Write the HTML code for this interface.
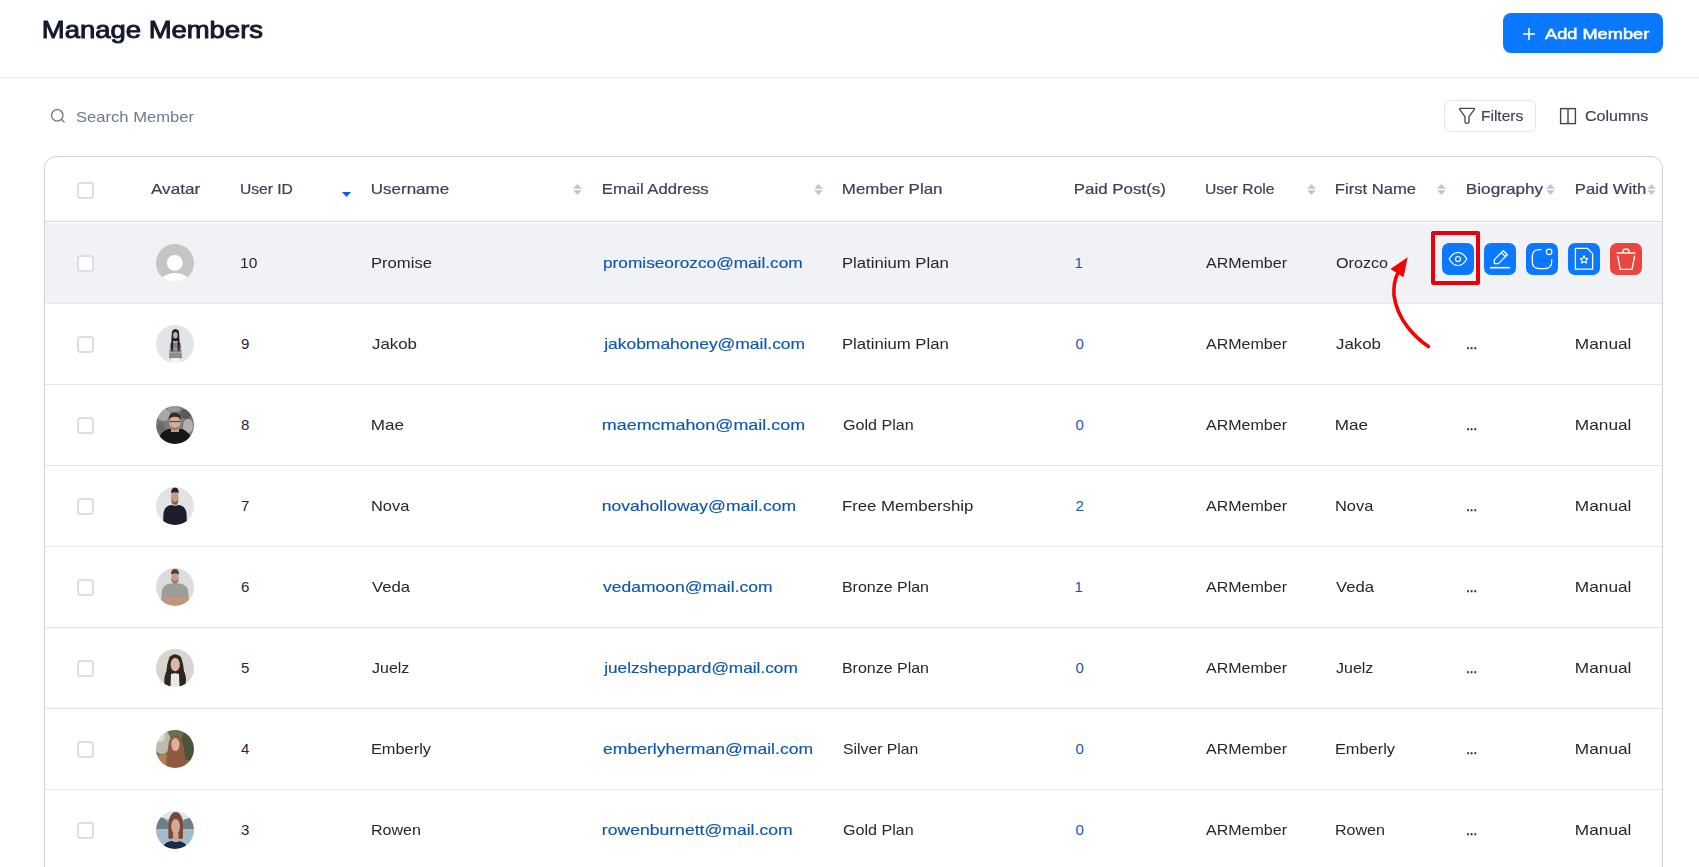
<!DOCTYPE html>
<html><head><meta charset="utf-8"><style>
html,body{margin:0;padding:0;}
body{width:1699px;height:867px;overflow:hidden;position:relative;background:#fff;font-family:"Liberation Sans", sans-serif;}
.t{position:absolute;white-space:nowrap;line-height:1;}
.hdrline{position:absolute;left:0;top:77px;width:1699px;height:1px;background:#e3e5e9;}
.btn{position:absolute;left:1503px;top:13px;width:160px;height:40px;border-radius:8px;background:#0a78ff;}
.filters{position:absolute;left:1444px;top:100px;width:90px;height:30px;border:1px solid #e2e5ea;border-radius:6px;}
.tbl{position:absolute;left:44px;top:156px;width:1617px;height:760px;border:1px solid #cfd2d8;border-radius:12px;}
.hl{position:absolute;left:45px;width:1617px;height:1px;background:#e4e6ea;}
.hb{position:absolute;left:45px;top:221px;width:1617px;height:1px;background:#d5d8dd;}
.r1{position:absolute;left:45px;top:223px;width:1617px;height:80px;background:#f1f2f6;}
.cb{position:absolute;left:77px;width:13px;height:13px;border:2px solid #dcdde6;border-radius:3.5px;background:#fff;}
.av{position:absolute;}
.so{position:absolute;}
.ab{position:absolute;top:243px;width:32px;height:32px;border-radius:7px;background:#0a78ff;}
</style></head><body>
<div class="hdrline"></div>
<div class="btn"></div>
<svg style="position:absolute;left:1522px;top:27px" width="14" height="14" viewBox="0 0 14 14"><path d="M7 1 V13 M1 7 H13" stroke="#fff" stroke-width="1.6" fill="none"/></svg>
<svg style="position:absolute;left:50px;top:108px" width="16" height="16" viewBox="0 0 16 16"><circle cx="7.3" cy="7.3" r="5.7" stroke="#646b78" stroke-width="1.2" fill="none"/><path d="M11.5 11.5 L14.2 14.2" stroke="#646b78" stroke-width="1.2" stroke-linecap="round"/></svg>
<div class="filters"></div>
<svg style="position:absolute;left:1458px;top:107px" width="18" height="18" viewBox="0 0 18 18"><path d="M1.6 2.4 Q1.2 1.4 2.4 1.4 H15.6 Q16.8 1.4 16.4 2.4 L11 9.6 V14.8 Q11 16.4 9 16.4 Q7 16.4 7 14.8 V9.6 Z" stroke="#3e4658" stroke-width="1.3" fill="none" stroke-linejoin="round"/></svg>
<svg style="position:absolute;left:1559px;top:107px" width="18" height="18" viewBox="0 0 18 18"><rect x="1.6" y="1.6" width="14.8" height="15" stroke="#3e4658" stroke-width="1.4" fill="none"/><path d="M9 1.6 V16.6" stroke="#3e4658" stroke-width="1.4"/></svg>
<div class="tbl"></div>
<div class="hb"></div>
<div class="r1"></div>
<div class="hl" style="top:303px"></div><div class="hl" style="top:384px"></div><div class="hl" style="top:465px"></div><div class="hl" style="top:546px"></div><div class="hl" style="top:627px"></div><div class="hl" style="top:708px"></div><div class="hl" style="top:789px"></div>
<div class="cb" style="top:182px"></div><div class="cb" style="top:255px"></div><div class="cb" style="top:336px"></div><div class="cb" style="top:417px"></div><div class="cb" style="top:498px"></div><div class="cb" style="top:579px"></div><div class="cb" style="top:660px"></div><div class="cb" style="top:741px"></div><div class="cb" style="top:822px"></div>
<svg class="av" style="left:156px;top:244px" width="38" height="38" viewBox="0 0 38 38"><defs><clipPath id="av0"><circle cx="19" cy="19" r="19"/></clipPath></defs><g clip-path="url(#av0)"><rect width="38" height="38" fill="#c4c5c7"/><circle cx="18.8" cy="18.9" r="7.9" fill="#fff"/><ellipse cx="19" cy="40.5" rx="15.5" ry="11.5" fill="#fff"/></g></svg><svg class="av" style="left:156px;top:325px" width="38" height="38" viewBox="0 0 38 38"><defs><clipPath id="av1"><circle cx="19" cy="19" r="19"/></clipPath><filter id="fav1" x="-10%" y="-10%" width="120%" height="120%"><feGaussianBlur stdDeviation="0.6"/></filter></defs><g clip-path="url(#av1)"><g filter="url(#fav1)"><rect width="38" height="38" fill="#e2e4e8"/><path d="M14 18.5 Q19.3 16 24.8 18.5 L25.8 33 Q19.5 35 13.2 33 Z" fill="#80828c"/><rect x="17.8" y="12" width="3.3" height="5.5" fill="#c9a392"/><rect x="14" y="23.5" width="11" height="1.2" fill="#a6a8b0"/><rect x="14" y="27" width="11" height="1.2" fill="#a6a8b0"/><path d="M13.5 29 Q19.5 26.5 25.8 29 L25.5 32 Q19.5 34 13.5 32 Z" fill="#9a8896"/><path d="M16 6 Q19.4 1.8 22.9 6 L23.5 15 Q24.2 22 23.3 26 L21.8 26 L21.5 16 L17.3 16 L17 26 L15.4 26 Q14.7 22 15.3 15 Z" fill="#2a2220"/><ellipse cx="19.4" cy="10.2" rx="2.3" ry="3.3" fill="#d0aa98"/><rect x="15.5" y="33" width="8" height="6" fill="#f3f3f3"/></g></g></svg><svg class="av" style="left:156px;top:406px" width="38" height="38" viewBox="0 0 38 38"><defs><clipPath id="av2"><circle cx="19" cy="19" r="19"/></clipPath><filter id="fav2" x="-10%" y="-10%" width="120%" height="120%"><feGaussianBlur stdDeviation="0.6"/></filter></defs><g clip-path="url(#av2)"><g filter="url(#fav2)"><rect width="38" height="38" fill="#7c7c7c"/><ellipse cx="8" cy="9" rx="7" ry="6" fill="#a8a8a8"/><ellipse cx="30" cy="8" rx="6" ry="5" fill="#5a5a5a"/><ellipse cx="32" cy="20" rx="5" ry="7" fill="#b0b0b0"/><ellipse cx="5" cy="22" rx="4" ry="6" fill="#6a6a6a"/><ellipse cx="18" cy="3" rx="6" ry="3" fill="#9a9a9a"/><path d="M1 38 Q3 26 12 23 L26 23 Q35 26 37 38 Z" fill="#141416"/><rect x="15" y="20" width="8" height="6" fill="#bf9c88"/><ellipse cx="18.8" cy="16.5" rx="5.6" ry="7" fill="#d0ab95"/><path d="M12.8 14 Q12 6.5 18.8 6.5 Q25.5 6.5 24.8 14 Q23 10.5 18.8 10.8 Q14.5 10.8 12.8 14Z" fill="#3b2b22"/><rect x="13.6" y="15.2" width="10.4" height="0.9" fill="#2e2e2e"/><path d="M15 20 Q18.8 24.5 22.6 20 L22.4 22.5 Q18.8 25 15.2 22.5Z" fill="#8a6a58"/></g></g></svg><svg class="av" style="left:156px;top:487px" width="38" height="38" viewBox="0 0 38 38"><defs><clipPath id="av3"><circle cx="19" cy="19" r="19"/></clipPath><filter id="fav3" x="-10%" y="-10%" width="120%" height="120%"><feGaussianBlur stdDeviation="0.6"/></filter></defs><g clip-path="url(#av3)"><g filter="url(#fav3)"><rect width="38" height="38" fill="#e3e3e5"/><path d="M7 38 L7.5 26 Q8.5 19 15 18 L23 18 Q29.5 19 30.5 26 L31 38 Z" fill="#1d1e29"/><rect x="16.5" y="15" width="5" height="4" fill="#b58d74"/><ellipse cx="18.8" cy="11" rx="3.8" ry="6.2" fill="#c49a80"/><path d="M15 6.5 Q15 0.5 19 0.5 Q23 0.5 22.6 6.5 Q19 4 15 6.5Z" fill="#2a2220"/><path d="M15.5 12.5 Q19 17.5 22.2 12.5 L22 16 Q19 18.5 15.7 16Z" fill="#7a5a4a"/></g></g></svg><svg class="av" style="left:156px;top:568px" width="38" height="38" viewBox="0 0 38 38"><defs><clipPath id="av4"><circle cx="19" cy="19" r="19"/></clipPath><filter id="fav4" x="-10%" y="-10%" width="120%" height="120%"><feGaussianBlur stdDeviation="0.6"/></filter></defs><g clip-path="url(#av4)"><g filter="url(#fav4)"><rect width="38" height="38" fill="#dcdcdd"/><path d="M5 34 L6 22 Q8 16 15 15.5 L23 15.5 Q30 16 32 22 L33 34 Z" fill="#9c9d99"/><rect x="5" y="29" width="28" height="9" rx="4" fill="#c3947a"/><rect x="16.8" y="12" width="4.4" height="4" fill="#b88c74"/><ellipse cx="19" cy="9.5" rx="3.8" ry="5.3" fill="#c9a18a"/><path d="M15 6.5 Q15 1 19 1 Q23.2 1 23 6.5 Q19 4.3 15 6.5Z" fill="#5a3f30"/><path d="M15.5 10.5 Q19 16 22.5 10.5 L22.3 13.5 Q19 16 15.7 13.5Z" fill="#8e6a56"/></g></g></svg><svg class="av" style="left:156px;top:649px" width="38" height="38" viewBox="0 0 38 38"><defs><clipPath id="av5"><circle cx="19" cy="19" r="19"/></clipPath><filter id="fav5" x="-10%" y="-10%" width="120%" height="120%"><feGaussianBlur stdDeviation="0.6"/></filter></defs><g clip-path="url(#av5)"><g filter="url(#fav5)"><rect width="38" height="38" fill="#d9d4cf"/><path d="M13.5 8 Q19 2.5 25 8 Q27.5 15 28 22 Q31 28 29.5 36 L24 38 L14 38 L8.5 36 Q7.5 28 10.5 22 Q11 14 13.5 8Z" fill="#2f2621"/><ellipse cx="19.2" cy="15.5" rx="4.6" ry="6.8" fill="#ddb8a6"/><path d="M15 25 Q19 23.5 23 25 L23.5 38 L14.5 38 Z" fill="#ece7e7"/></g></g></svg><svg class="av" style="left:156px;top:730px" width="38" height="38" viewBox="0 0 38 38"><defs><clipPath id="av6"><circle cx="19" cy="19" r="19"/></clipPath><filter id="fav6" x="-10%" y="-10%" width="120%" height="120%"><feGaussianBlur stdDeviation="0.6"/></filter></defs><g clip-path="url(#av6)"><g filter="url(#fav6)"><rect width="38" height="38" fill="#6a7050"/><ellipse cx="6" cy="12" rx="9" ry="12" fill="#b9bcae"/><ellipse cx="4" cy="6" rx="5" ry="6" fill="#dcdcd4"/><ellipse cx="33" cy="16" rx="8" ry="18" fill="#4b533a"/><ellipse cx="8" cy="33" rx="14" ry="9" fill="#b07f52"/><ellipse cx="30" cy="36" rx="9" ry="6" fill="#8a6a45"/><path d="M13 11 Q18 3 25 8 Q28.5 17 29 26 Q31 33 28 38 L11 38 Q9.5 30 11.5 22 Z" fill="#8e5a40"/><ellipse cx="19.4" cy="14.5" rx="4.1" ry="6.6" fill="#ddb09a"/></g></g></svg><svg class="av" style="left:156px;top:811px" width="38" height="38" viewBox="0 0 38 38"><defs><clipPath id="av7"><circle cx="19" cy="19" r="19"/></clipPath><filter id="fav7" x="-10%" y="-10%" width="120%" height="120%"><feGaussianBlur stdDeviation="0.6"/></filter></defs><g clip-path="url(#av7)"><g filter="url(#fav7)"><rect width="38" height="38" fill="#a2bccb"/><rect x="0" y="0" width="38" height="8" fill="#d8e6ec"/><path d="M0 6 Q8 4 14 14 L14 18 L0 18 Z" fill="#6f7f84"/><path d="M38 7 Q30 5 24 14 L24 18 L38 18 Z" fill="#6f7f84"/><path d="M6 38 Q8 31 15 30 L23 30 Q30 31 32 38 Z" fill="#1f2c4a"/><path d="M12.5 10 Q15 1 19.5 1 Q25 1 26.8 10 L27 27 Q24 29 22 27 L17 27 Q14 29 12.3 27 Z" fill="#7a4a35"/><ellipse cx="19.6" cy="15.5" rx="4.4" ry="7.5" fill="#d5ab98"/><rect x="17" y="22" width="5.5" height="9" fill="#cfa391"/></g></g></svg>
<svg class="so" style="left:573px;top:184px" width="9" height="11" viewBox="0 0 9 11"><path d="M0.2 4.7 L4.5 0 L8.8 4.7Z M0.2 6.2 L8.8 6.2 L4.5 10.9Z" fill="#c3c4d0"/></svg><svg class="so" style="left:814px;top:184px" width="9" height="11" viewBox="0 0 9 11"><path d="M0.2 4.7 L4.5 0 L8.8 4.7Z M0.2 6.2 L8.8 6.2 L4.5 10.9Z" fill="#c3c4d0"/></svg><svg class="so" style="left:1307px;top:184px" width="9" height="11" viewBox="0 0 9 11"><path d="M0.2 4.7 L4.5 0 L8.8 4.7Z M0.2 6.2 L8.8 6.2 L4.5 10.9Z" fill="#c3c4d0"/></svg><svg class="so" style="left:1437px;top:184px" width="9" height="11" viewBox="0 0 9 11"><path d="M0.2 4.7 L4.5 0 L8.8 4.7Z M0.2 6.2 L8.8 6.2 L4.5 10.9Z" fill="#c3c4d0"/></svg><svg class="so" style="left:1546px;top:184px" width="9" height="11" viewBox="0 0 9 11"><path d="M0.2 4.7 L4.5 0 L8.8 4.7Z M0.2 6.2 L8.8 6.2 L4.5 10.9Z" fill="#c3c4d0"/></svg><svg class="so" style="left:1647px;top:184px" width="9" height="11" viewBox="0 0 9 11"><path d="M0.2 4.7 L4.5 0 L8.8 4.7Z M0.2 6.2 L8.8 6.2 L4.5 10.9Z" fill="#c3c4d0"/></svg><svg class="so" style="left:342px;top:192px" width="9" height="5" viewBox="0 0 9 5"><path d="M0 0 L9 0 L4.5 5Z" fill="#0b5ce6"/></svg>
<div class="ab" style="left:1442px"></div>
<div class="ab" style="left:1484px"></div>
<div class="ab" style="left:1526px"></div>
<div class="ab" style="left:1568px"></div>
<div class="ab" style="left:1610px;background:#e9463f"></div>
<svg style="position:absolute;left:1442px;top:243px" width="32" height="32" viewBox="0 0 32 32"><path d="M7.2 16 C9.8 11.2 12.6 9.5 16 9.5 C19.4 9.5 22.2 11.2 24.8 16 C22.2 20.8 19.4 22.5 16 22.5 C12.6 22.5 9.8 20.8 7.2 16Z" stroke="#fff" stroke-width="1.2" fill="none"/><circle cx="16" cy="16" r="2.5" stroke="#fff" stroke-width="1.2" fill="none"/></svg>
<svg style="position:absolute;left:1484px;top:243px" width="32" height="32" viewBox="0 0 32 32"><path d="M10.4 20.6 L10.4 16.6 L19.3 7.7 L23.3 11.7 L14.4 20.6 Z M17.4 9.6 L21.4 13.6" stroke="#fff" stroke-width="1.3" fill="none" stroke-linejoin="round"/><path d="M6 24.7 H26" stroke="#fff" stroke-width="1.6"/></svg>
<svg style="position:absolute;left:1526px;top:243px" width="32" height="32" viewBox="0 0 32 32"><path d="M15.4 6.6 H13.2 Q6.3 6.6 6.3 13.5 V18.8 Q6.3 25.6 13.2 25.6 H18.8 Q25.7 25.6 25.7 18.8 V16.2" stroke="#fff" stroke-width="1.25" fill="none"/><circle cx="23.1" cy="8.8" r="2.8" stroke="#fff" stroke-width="1.25" fill="none"/></svg>
<svg style="position:absolute;left:1568px;top:243px" width="32" height="32" viewBox="0 0 32 32"><path d="M7.4 5.3 H19.3 L24.6 10.6 V26.2 H7.4 Z" stroke="#fff" stroke-width="1.3" fill="none" stroke-linejoin="round"/><path d="M16 12.8 L17.2 15.3 L19.8 15.6 L17.9 17.4 L18.4 20 L16 18.7 L13.6 20 L14.1 17.4 L12.2 15.6 L14.8 15.3 Z" stroke="#fff" stroke-width="1.2" fill="none" stroke-linejoin="round"/></svg>
<svg style="position:absolute;left:1610px;top:243px" width="32" height="32" viewBox="0 0 32 32"><path d="M6.6 10 H25.4" stroke="#fff" stroke-width="1.4"/><path d="M13 10 V8.5 Q13 6 16 6 Q19 6 19 8.5 V10" stroke="#fff" stroke-width="1.3" fill="none"/><path d="M7.6 12.7 L10.3 26.3 H22 L24.7 12.7" stroke="#fff" stroke-width="1.3" fill="none" stroke-linejoin="round"/></svg>
<div style="position:absolute;left:1431px;top:231px;width:41px;height:46px;border:4px solid #e60008;border-radius:2px;"></div>
<svg style="position:absolute;left:1380px;top:245px" width="60" height="110" viewBox="0 0 60 110"><path d="M48.4 101.5 C36 93 17.5 76 14 50.5 C13.3 41 14.8 34 18 27.5" stroke="#f00505" stroke-width="3.6" fill="none" stroke-linecap="round"/><path d="M27.7 12.3 L10.4 24 L23.5 32.3 Z" fill="#f00505"/></svg>
<span class="t" style="left:42.00px;top:17.68px;font-size:24px;transform:scaleX(1.1433);transform-origin:1.00px 0;color:#141a2c;-webkit-text-stroke:0.95px #141a2c;">Manage Members</span><span class="t" style="left:1545.00px;top:25.88px;font-size:15.5px;transform:scaleX(1.1742);transform-origin:0.00px 0;color:#ffffff;-webkit-text-stroke:0.55px #ffffff;">Add Member</span><span class="t" style="left:76.00px;top:109.30px;font-size:15px;transform:scaleX(1.1058);transform-origin:0.00px 0;color:#6b7a92;">Search Member</span><span class="t" style="left:1481.00px;top:108.73px;font-size:14.5px;transform:scaleX(1.0727);transform-origin:1.00px 0;color:#3a4254;-webkit-text-stroke:0.15px #3a4254;">Filters</span><span class="t" style="left:1585.00px;top:108.73px;font-size:14.5px;transform:scaleX(1.1060);transform-origin:0.00px 0;color:#3a4254;-webkit-text-stroke:0.15px #3a4254;">Columns</span><span class="t" style="left:150.70px;top:181.73px;font-size:14.5px;transform:scaleX(1.1790);transform-origin:0.00px 0;color:#3a4256;-webkit-text-stroke:0.2px #3a4256;">Avatar</span><span class="t" style="left:239.80px;top:181.73px;font-size:14.5px;transform:scaleX(1.0782);transform-origin:1.00px 0;color:#3a4256;-webkit-text-stroke:0.2px #3a4256;">User ID</span><span class="t" style="left:370.90px;top:181.73px;font-size:14.5px;transform:scaleX(1.1698);transform-origin:1.00px 0;color:#3a4256;-webkit-text-stroke:0.2px #3a4256;">Username</span><span class="t" style="left:601.80px;top:181.73px;font-size:14.5px;transform:scaleX(1.1526);transform-origin:1.00px 0;color:#3a4256;-webkit-text-stroke:0.2px #3a4256;">Email Address</span><span class="t" style="left:842.40px;top:181.73px;font-size:14.5px;transform:scaleX(1.1672);transform-origin:1.00px 0;color:#3a4256;-webkit-text-stroke:0.2px #3a4256;">Member Plan</span><span class="t" style="left:1074.30px;top:181.73px;font-size:14.5px;transform:scaleX(1.1654);transform-origin:1.00px 0;color:#3a4256;-webkit-text-stroke:0.2px #3a4256;">Paid Post(s)</span><span class="t" style="left:1204.50px;top:181.73px;font-size:14.5px;transform:scaleX(1.0804);transform-origin:1.00px 0;color:#3a4256;-webkit-text-stroke:0.2px #3a4256;">User Role</span><span class="t" style="left:1335.00px;top:181.73px;font-size:14.5px;transform:scaleX(1.1457);transform-origin:1.00px 0;color:#3a4256;-webkit-text-stroke:0.2px #3a4256;">First Name</span><span class="t" style="left:1465.70px;top:181.73px;font-size:14.5px;transform:scaleX(1.1838);transform-origin:1.00px 0;color:#3a4256;-webkit-text-stroke:0.2px #3a4256;">Biography</span><span class="t" style="left:1574.70px;top:181.73px;font-size:14.5px;transform:scaleX(1.1495);transform-origin:1.00px 0;color:#3a4256;-webkit-text-stroke:0.2px #3a4256;">Paid With</span><span class="t" style="left:240.00px;top:255.30px;font-size:15px;transform:scaleX(1.0391);transform-origin:1.00px 0;color:#23272f;">10</span><span class="t" style="left:370.80px;top:255.30px;font-size:15px;transform:scaleX(1.1124);transform-origin:1.00px 0;color:#23272f;">Promise</span><span class="t" style="left:602.50px;top:255.30px;font-size:15px;transform:scaleX(1.1501);transform-origin:0.00px 0;color:#0c56ae;-webkit-text-stroke:0.15px #0c56ae;">promiseorozco@mail.com</span><span class="t" style="left:842.40px;top:255.30px;font-size:15px;transform:scaleX(1.1149);transform-origin:1.00px 0;color:#23272f;">Platinium Plan</span><span class="t" style="left:1074.50px;top:255.30px;font-size:15px;letter-spacing:0.000px;color:#1a58b4;">1</span><span class="t" style="left:1205.80px;top:255.30px;font-size:15px;transform:scaleX(1.0678);transform-origin:0.00px 0;color:#23272f;">ARMember</span><span class="t" style="left:1336.00px;top:255.30px;font-size:15px;transform:scaleX(1.0770);transform-origin:0.00px 0;color:#23272f;">Orozco</span><span class="t" style="left:241.00px;top:336.30px;font-size:15px;letter-spacing:0.000px;color:#23272f;">9</span><span class="t" style="left:371.80px;top:336.30px;font-size:15px;transform:scaleX(1.1239);transform-origin:0.00px 0;color:#23272f;">Jakob</span><span class="t" style="left:603.50px;top:336.30px;font-size:15px;transform:scaleX(1.1627);transform-origin:-1.00px 0;color:#0c56ae;-webkit-text-stroke:0.15px #0c56ae;">jakobmahoney@mail.com</span><span class="t" style="left:842.40px;top:336.30px;font-size:15px;transform:scaleX(1.1149);transform-origin:1.00px 0;color:#23272f;">Platinium Plan</span><span class="t" style="left:1075.50px;top:336.30px;font-size:15px;letter-spacing:0.000px;color:#1a58b4;">0</span><span class="t" style="left:1205.80px;top:336.30px;font-size:15px;transform:scaleX(1.0678);transform-origin:0.00px 0;color:#23272f;">ARMember</span><span class="t" style="left:1336.00px;top:336.30px;font-size:15px;transform:scaleX(1.1239);transform-origin:0.00px 0;color:#23272f;">Jakob</span><span class="t" style="left:1465.50px;top:336.30px;font-size:15px;transform:scaleX(0.8708);transform-origin:1.00px 0;color:#23272f;-webkit-text-stroke:0.5px #23272f;">...</span><span class="t" style="left:1574.50px;top:336.30px;font-size:15px;transform:scaleX(1.1491);transform-origin:1.00px 0;color:#23272f;">Manual</span><span class="t" style="left:241.00px;top:417.30px;font-size:15px;letter-spacing:0.000px;color:#23272f;">8</span><span class="t" style="left:370.80px;top:417.30px;font-size:15px;transform:scaleX(1.1388);transform-origin:1.00px 0;color:#23272f;">Mae</span><span class="t" style="left:601.50px;top:417.30px;font-size:15px;transform:scaleX(1.1939);transform-origin:1.00px 0;color:#0c56ae;-webkit-text-stroke:0.15px #0c56ae;">maemcmahon@mail.com</span><span class="t" style="left:843.40px;top:417.30px;font-size:15px;transform:scaleX(1.0728);transform-origin:0.00px 0;color:#23272f;">Gold Plan</span><span class="t" style="left:1075.50px;top:417.30px;font-size:15px;letter-spacing:0.000px;color:#1a58b4;">0</span><span class="t" style="left:1205.80px;top:417.30px;font-size:15px;transform:scaleX(1.0678);transform-origin:0.00px 0;color:#23272f;">ARMember</span><span class="t" style="left:1335.00px;top:417.30px;font-size:15px;transform:scaleX(1.1388);transform-origin:1.00px 0;color:#23272f;">Mae</span><span class="t" style="left:1465.50px;top:417.30px;font-size:15px;transform:scaleX(0.8708);transform-origin:1.00px 0;color:#23272f;-webkit-text-stroke:0.5px #23272f;">...</span><span class="t" style="left:1574.50px;top:417.30px;font-size:15px;transform:scaleX(1.1491);transform-origin:1.00px 0;color:#23272f;">Manual</span><span class="t" style="left:241.00px;top:498.30px;font-size:15px;letter-spacing:0.000px;color:#23272f;">7</span><span class="t" style="left:370.80px;top:498.30px;font-size:15px;transform:scaleX(1.0959);transform-origin:1.00px 0;color:#23272f;">Nova</span><span class="t" style="left:601.50px;top:498.30px;font-size:15px;transform:scaleX(1.1693);transform-origin:1.00px 0;color:#0c56ae;-webkit-text-stroke:0.15px #0c56ae;">novaholloway@mail.com</span><span class="t" style="left:842.40px;top:498.30px;font-size:15px;transform:scaleX(1.1188);transform-origin:1.00px 0;color:#23272f;">Free Membership</span><span class="t" style="left:1075.50px;top:498.30px;font-size:15px;letter-spacing:0.000px;color:#1a58b4;">2</span><span class="t" style="left:1205.80px;top:498.30px;font-size:15px;transform:scaleX(1.0678);transform-origin:0.00px 0;color:#23272f;">ARMember</span><span class="t" style="left:1335.00px;top:498.30px;font-size:15px;transform:scaleX(1.0959);transform-origin:1.00px 0;color:#23272f;">Nova</span><span class="t" style="left:1465.50px;top:498.30px;font-size:15px;transform:scaleX(0.8708);transform-origin:1.00px 0;color:#23272f;-webkit-text-stroke:0.5px #23272f;">...</span><span class="t" style="left:1574.50px;top:498.30px;font-size:15px;transform:scaleX(1.1491);transform-origin:1.00px 0;color:#23272f;">Manual</span><span class="t" style="left:241.00px;top:579.30px;font-size:15px;letter-spacing:0.000px;color:#23272f;">6</span><span class="t" style="left:371.80px;top:579.30px;font-size:15px;transform:scaleX(1.1130);transform-origin:0.00px 0;color:#23272f;">Veda</span><span class="t" style="left:602.50px;top:579.30px;font-size:15px;transform:scaleX(1.1672);transform-origin:0.00px 0;color:#0c56ae;-webkit-text-stroke:0.15px #0c56ae;">vedamoon@mail.com</span><span class="t" style="left:842.40px;top:579.30px;font-size:15px;transform:scaleX(1.0650);transform-origin:1.00px 0;color:#23272f;">Bronze Plan</span><span class="t" style="left:1074.50px;top:579.30px;font-size:15px;letter-spacing:0.000px;color:#1a58b4;">1</span><span class="t" style="left:1205.80px;top:579.30px;font-size:15px;transform:scaleX(1.0678);transform-origin:0.00px 0;color:#23272f;">ARMember</span><span class="t" style="left:1336.00px;top:579.30px;font-size:15px;transform:scaleX(1.1130);transform-origin:0.00px 0;color:#23272f;">Veda</span><span class="t" style="left:1465.50px;top:579.30px;font-size:15px;transform:scaleX(0.8708);transform-origin:1.00px 0;color:#23272f;-webkit-text-stroke:0.5px #23272f;">...</span><span class="t" style="left:1574.50px;top:579.30px;font-size:15px;transform:scaleX(1.1491);transform-origin:1.00px 0;color:#23272f;">Manual</span><span class="t" style="left:241.00px;top:660.30px;font-size:15px;letter-spacing:0.000px;color:#23272f;">5</span><span class="t" style="left:371.80px;top:660.30px;font-size:15px;transform:scaleX(1.0661);transform-origin:0.00px 0;color:#23272f;">Juelz</span><span class="t" style="left:603.50px;top:660.30px;font-size:15px;transform:scaleX(1.1482);transform-origin:-1.00px 0;color:#0c56ae;-webkit-text-stroke:0.15px #0c56ae;">juelzsheppard@mail.com</span><span class="t" style="left:842.40px;top:660.30px;font-size:15px;transform:scaleX(1.0650);transform-origin:1.00px 0;color:#23272f;">Bronze Plan</span><span class="t" style="left:1075.50px;top:660.30px;font-size:15px;letter-spacing:0.000px;color:#1a58b4;">0</span><span class="t" style="left:1205.80px;top:660.30px;font-size:15px;transform:scaleX(1.0678);transform-origin:0.00px 0;color:#23272f;">ARMember</span><span class="t" style="left:1336.00px;top:660.30px;font-size:15px;transform:scaleX(1.0661);transform-origin:0.00px 0;color:#23272f;">Juelz</span><span class="t" style="left:1465.50px;top:660.30px;font-size:15px;transform:scaleX(0.8708);transform-origin:1.00px 0;color:#23272f;-webkit-text-stroke:0.5px #23272f;">...</span><span class="t" style="left:1574.50px;top:660.30px;font-size:15px;transform:scaleX(1.1491);transform-origin:1.00px 0;color:#23272f;">Manual</span><span class="t" style="left:241.00px;top:741.30px;font-size:15px;letter-spacing:0.000px;color:#23272f;">4</span><span class="t" style="left:370.80px;top:741.30px;font-size:15px;transform:scaleX(1.0915);transform-origin:1.00px 0;color:#23272f;">Emberly</span><span class="t" style="left:602.50px;top:741.30px;font-size:15px;transform:scaleX(1.1707);transform-origin:0.00px 0;color:#0c56ae;-webkit-text-stroke:0.15px #0c56ae;">emberlyherman@mail.com</span><span class="t" style="left:843.40px;top:741.30px;font-size:15px;transform:scaleX(1.0511);transform-origin:0.00px 0;color:#23272f;">Silver Plan</span><span class="t" style="left:1075.50px;top:741.30px;font-size:15px;letter-spacing:0.000px;color:#1a58b4;">0</span><span class="t" style="left:1205.80px;top:741.30px;font-size:15px;transform:scaleX(1.0678);transform-origin:0.00px 0;color:#23272f;">ARMember</span><span class="t" style="left:1335.00px;top:741.30px;font-size:15px;transform:scaleX(1.0915);transform-origin:1.00px 0;color:#23272f;">Emberly</span><span class="t" style="left:1465.50px;top:741.30px;font-size:15px;transform:scaleX(0.8708);transform-origin:1.00px 0;color:#23272f;-webkit-text-stroke:0.5px #23272f;">...</span><span class="t" style="left:1574.50px;top:741.30px;font-size:15px;transform:scaleX(1.1491);transform-origin:1.00px 0;color:#23272f;">Manual</span><span class="t" style="left:241.00px;top:822.30px;font-size:15px;letter-spacing:0.000px;color:#23272f;">3</span><span class="t" style="left:370.80px;top:822.30px;font-size:15px;transform:scaleX(1.0695);transform-origin:1.00px 0;color:#23272f;">Rowen</span><span class="t" style="left:601.50px;top:822.30px;font-size:15px;transform:scaleX(1.1718);transform-origin:1.00px 0;color:#0c56ae;-webkit-text-stroke:0.15px #0c56ae;">rowenburnett@mail.com</span><span class="t" style="left:843.40px;top:822.30px;font-size:15px;transform:scaleX(1.0728);transform-origin:0.00px 0;color:#23272f;">Gold Plan</span><span class="t" style="left:1075.50px;top:822.30px;font-size:15px;letter-spacing:0.000px;color:#1a58b4;">0</span><span class="t" style="left:1205.80px;top:822.30px;font-size:15px;transform:scaleX(1.0678);transform-origin:0.00px 0;color:#23272f;">ARMember</span><span class="t" style="left:1335.00px;top:822.30px;font-size:15px;transform:scaleX(1.0695);transform-origin:1.00px 0;color:#23272f;">Rowen</span><span class="t" style="left:1465.50px;top:822.30px;font-size:15px;transform:scaleX(0.8708);transform-origin:1.00px 0;color:#23272f;-webkit-text-stroke:0.5px #23272f;">...</span><span class="t" style="left:1574.50px;top:822.30px;font-size:15px;transform:scaleX(1.1491);transform-origin:1.00px 0;color:#23272f;">Manual</span>
</body></html>
